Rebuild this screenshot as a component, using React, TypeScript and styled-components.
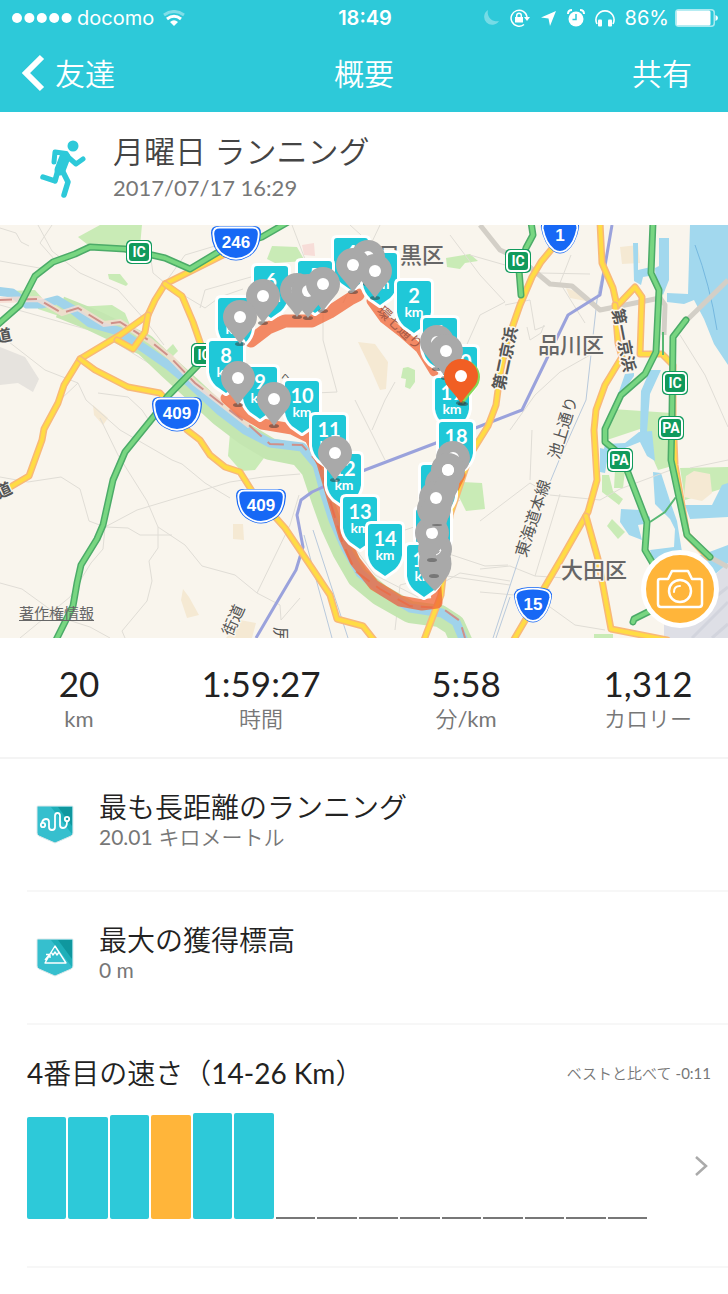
import React from "react";
import styled, { createGlobalStyle } from "styled-components";

const TEAL = "#2dc9d9";
const AMBER = "#ffb53a";

const GlobalStyle = createGlobalStyle`
  *, *::before, *::after { box-sizing: border-box; }
  body {
    margin: 0;
    background: #fff;
    color: #222;
    font-family: Lato, "Noto Sans CJK JP", sans-serif;
  }
  button { font: inherit; color: inherit; border: 0; padding: 0; background: none; cursor: pointer; }
  h1, h2, h3, p, dl, dd, dt, ul { margin: 0; padding: 0; font-weight: 400; }
  svg { display: block; }
`;

const Header = styled.header`
  background: ${TEAL};
  color: #fff;
`;

const StatusBar = styled.div`
  display: grid;
  grid-template-columns: 1fr auto 1fr;
  align-items: center;
  height: 36px;
  padding: 0 10px 0 12px;
  font: 400 20px Inter, sans-serif;
`;

const StatusGroup = styled.div<{ $end?: boolean }>`
  display: flex;
  align-items: center;
  gap: ${(p) => (p.$end ? 6 : 9)}px;
  justify-content: ${(p) => (p.$end ? "flex-end" : "flex-start")};
`;

const Carrier = styled.span`
  display: flex;
  align-items: center;
  gap: 5px;
`;

const StatusIcons = styled.span`
  display: flex;
  align-items: center;
  gap: 10px;
  margin-right: 4px;
`;

const Clock = styled.time`
  font-weight: 600;
`;

const NavBar = styled.nav`
  display: grid;
  grid-template-columns: 1fr auto 1fr;
  align-items: center;
  height: 76px;
  padding: 0 22px 2px;
`;

const NavTitle = styled.h1`
  font-size: 30px;
  line-height: 40px;
  font-weight: 350;
`;

const NavButton = styled.button<{ $end?: boolean }>`
  display: flex;
  align-items: center;
  gap: 10px;
  justify-self: ${(p) => (p.$end ? "end" : "start")};
  padding-right: ${(p) => (p.$end ? 14 : 0)}px;
  font-size: 30px;
  line-height: 40px;
  font-weight: 350;
`;

const Activity = styled.section`
  display: flex;
  align-items: center;
  gap: 26px;
  height: 113px;
  padding: 0 38px;
`;

const ActivityTitle = styled.h2`
  font-size: 31px;
  line-height: 38px;
  font-weight: 350;
  color: #444;
`;

const ActivityDate = styled.time`
  display: block;
  font-size: 22px;
  line-height: 36px;
  color: #777;
`;

const MapPanel = styled.section`
  position: relative;
  overflow: hidden;
`;

const MapDrawing = styled.svg`
  width: 100%;
  height: auto;
`;

const CameraButton = styled.button`
  position: absolute;
  right: 9px;
  bottom: 10px;
  display: grid;
  place-items: center;
  width: 78px;
  height: 78px;
  border: 5px solid #fff;
  border-radius: 50%;
  background: ${AMBER};
`;

const LegalLink = styled.a`
  position: absolute;
  left: 19px;
  bottom: 14px;
  font-size: 15px;
  line-height: 22px;
  color: #666;
`;

const Stats = styled.dl`
  display: grid;
  grid-template-columns: 158fr 206fr 204fr 160fr;
  padding: 24px 0;
  border-bottom: 2px solid #f4f4f4;
`;

const Stat = styled.div`
  display: flex;
  flex-direction: column-reverse;
  align-items: center;
`;

const StatValue = styled.dd`
  font-size: 35px;
  line-height: 43px;
`;

const StatLabel = styled.dt`
  font-size: 22px;
  line-height: 28px;
  font-weight: 350;
  color: #777;
`;

const Figure = styled.span`
  font-weight: 400;
`;

const Records = styled.ul`
  list-style: none;
  padding-left: 27px;
`;

const RecordRow = styled.li`
  display: flex;
  align-items: center;
  gap: 24px;
  height: 133px;
  padding-left: 8px;
  border-bottom: 2px solid #f7f7f7;
`;

const RecordText = styled.div`
  padding-bottom: 10px;
`;

const RecordTitle = styled.h3`
  font-size: 28px;
  line-height: 34px;
  font-weight: 350;
`;

const RecordValue = styled.p`
  font-size: 21px;
  line-height: 26px;
  font-weight: 350;
  color: #777;
`;

const Comparison = styled.section`
  margin-left: 27px;
  padding: 28px 17px 47px 0;
  border-bottom: 2px solid #f7f7f7;
`;

const ComparisonHead = styled.div`
  display: flex;
  align-items: center;
  justify-content: space-between;
  height: 40px;
`;

const ComparisonTitle = styled.h3`
  font-size: 28px;
  line-height: 40px;
  font-weight: 350;
`;

const ComparisonNote = styled.p`
  font-size: 15px;
  line-height: 24px;
  font-weight: 350;
  color: #777;
`;

const ChartRow = styled.div`
  display: flex;
  align-items: center;
  justify-content: space-between;
  gap: 44px;
  margin-top: 20px;
`;

const Bars = styled.div`
  display: flex;
  flex: 1;
  align-items: flex-end;
  gap: 2px;
  height: 106px;
`;

const Bar = styled.div<{ $size: number; $current?: boolean }>`
  flex: 1;
  height: ${(p) => p.$size}px;
  border-radius: ${(p) => (p.$size > 2 ? 2 : 0)}px;
  background: ${(p) => (p.$size <= 2 ? "#777" : p.$current ? AMBER : TEAL)};
`;

const stats: { value: string; label: React.ReactNode }[] = [
  { value: "20", label: <Figure>km</Figure> },
  { value: "1:59:27", label: "時間" },
  { value: "5:58", label: <>分<Figure>/km</Figure></> },
  { value: "1,312", label: "カロリー" },
];

const bars = [102, 102, 104, 104, 106, 106, 2, 2, 2, 2, 2, 2, 2, 2, 2];

const shields: [string, number, number][] = [
  ["4", 351, 66], ["3", 380, 81], ["5", 315, 89], ["6", 271, 94], ["2", 414, 109],
  ["7", 235, 126], ["1", 440, 146], ["8", 226, 169], ["20", 460, 175], ["9", 260, 195],
  ["19", 452, 206], ["10", 302, 209], ["11", 329, 243], ["18", 456, 250], ["12", 344, 282],
  ["17", 438, 293], ["13", 360, 325], ["16", 433, 337], ["14", 385, 352], ["15", 424, 373],
];

const pins: [number, number][] = [
  [368, 32], [353, 40], [375, 46], [297, 65], [308, 66], [323, 59], [263, 71], [240, 92],
  [437, 117], [446, 126], [238, 153], [274, 174], [335, 228], [453, 233],
  [442, 259], [448, 245], [434, 284], [436, 273], [435, 324], [432, 308],
];

function Shield({ label, x, y }: { label: string; x: number; y: number }) {
  return (
    <g transform={`translate(${x} ${y})`} fill="#fff" textAnchor="middle" fontFamily="Lato" fontWeight="700">
      <path
        d="M-14-53H14Q17-53 17-50V-22Q16-14 10-8L0-1L-10-8Q-16-14-17-22V-50Q-17-53-14-53Z"
        fill="#1fc8d8" stroke="#fff" strokeWidth="6" strokeLinejoin="round" paintOrder="stroke"
      />
      <text y="-31" fontSize="20">{label}</text>
      <text y="-17" fontSize="14">km</text>
    </g>
  );
}

function Pin({ x, y, color = "#a9a9a9", shadow = true }: { x: number; y: number; color?: string; shadow?: boolean }) {
  return (
    <g transform={`translate(${x} ${y})`}>
      {shadow && <ellipse cy="27" rx="5" ry="2" fill="#333" opacity=".5" />}
      <path d="M0 27Q-5 20-12 12A17 17 0 1 1 12 12Q5 20 0 27Z" fill={color} />
      <circle r="6" fill="#fff" />
    </g>
  );
}

function Road({ d, kind, width = 6 }: { d: string; kind: "main" | "toll"; width?: number }) {
  const [edge, fill] = kind === "main" ? ["#f8b878", "#ffdc44"] : ["#4cab68", "#78d681"];
  return (
    <g fill="none" strokeLinejoin="round" strokeLinecap="round">
      <path d={d} stroke={edge} strokeWidth={width + 1} />
      <path d={d} stroke={fill} strokeWidth={width - 2} />
    </g>
  );
}

function TollBadge({ label, x, y }: { label: string; x: number; y: number }) {
  return (
    <g transform={`translate(${x} ${y})`}>
      <rect x="-13" y="-12" width="26" height="24" rx="5" fill="#109a5c" />
      <rect x="-11" y="-10" width="22" height="20" rx="4" fill="#109a5c" stroke="#fff" strokeWidth="2" />
      <text y="5" fontSize="14" fontWeight="700" fontFamily="Roboto" fill="#fff" textAnchor="middle">{label}</text>
    </g>
  );
}

function RouteBadge({ label, x, y }: { label: string; x: number; y: number }) {
  const wide = label.length > 2;
  const outer = wide
    ? "M-18-17H18Q25-17 25-10Q24 8 12 14Q0 21-12 14Q-24 8-25-10Q-25-17-18-17Z"
    : "M-11-17Q0-19 11-17Q20-15 19-8Q16 8 7 15Q0 20-7 15Q-16 8-19-8Q-20-15-11-17Z";
  return (
    <g transform={`translate(${x} ${y})`}>
      <path d={outer} fill="#1768f5" />
      <path d={outer} fill="none" stroke="#fff" strokeWidth="2" transform="scale(.91)" />
      <text y="5" fontSize="17" fontWeight="700" fontFamily="Liberation Sans" fill="#fff" textAnchor="middle">{label}</text>
    </g>
  );
}

function MapLabel({ text, x, y, angle = 0, size = 18, color = "#555", weight = 400 }: {
  text: string; x: number; y: number; angle?: number; size?: number; color?: string; weight?: number;
}) {
  return (
    <text
      transform={`translate(${x} ${y}) rotate(${angle})`}
      fontSize={size} fontWeight={weight} fill={color}
      stroke="#faf5ed" strokeWidth="3" strokeLinejoin="round" paintOrder="stroke"
      fontFamily="Noto Sans CJK JP"
    >
      {text}
    </text>
  );
}

const river = "M-5 66L12 68L27 79L42 79L57 75L72 84L90 98L118 106L145 124L168 140L190 158L220 186L245 205L270 218L302 222L317 240L325 270L333 295L345 322L360 348L382 366L410 383L442 388L456 397L464 416";
const riverBank = "M60 82L90 94L145 120L168 142L190 162L220 190L245 209L270 224L300 230L312 244L322 274L332 302L343 326L358 352L380 370L410 387L440 391L454 400L462 418";

function RunMap() {
  return (
    <MapDrawing viewBox="0 0 728 413" role="img" aria-label="ランニングルートの地図">
      <rect width="728" height="413" fill="#f9f5ed" />

      <g fill="#c9ebb6">
        <path d="M100 0H142L140 21L92 23L78 12Z" />
        <path d="M108 49L120 49L128 59L126 61L109 54Z" />
        <path d="M75 82L112 80L125 88L130 100L112 101Z" />
        <path d="M10 66L35 65L42 73L20 76Z" />
        <path d="M38 80L62 80L110 105L118 110L80 98L38 84Z" />
        <path d="M173 119L178 126L172 132L166 126Z" />
        <path d="M272 21L297 22L305 36L275 38L267 34Z" />
        <path d="M403 143L408 142L415 145L415 157L410 164L405 162L406 154L401 153Z" />
        <path d="M446 33L470 29L478 36L465 38L460 44L447 42Z" />
        <path d="M462 257L482 258L485 284L466 286L459 272Z" />
        <path d="M230 208L242 213L263 225L264 233L255 245L241 246L228 231Z" />
        <path d="M612 184L672 188L676 240L658 245L640 204L604 216Z" />
        <path d="M602 250L609 250L613 266L623 274L619 280L602 267Z" />
        <path d="M615 245L625 246L623 263L614 263Z" />
        <path d="M612 294L625 307L618 314L607 301Z" />
        <path d="M680 243L728 242V262L685 275Z" />
        <path d="M594 409H613V413H594Z" />
        <path d="M725 35H728V52H725Z" />
      </g>
      <g fill="#f5e9d3">
        <path d="M358 117L375 119L388 137L386 164L380 165L370 142Z" />
        <path d="M686 251L694 246L710 249L712 268L702 276L684 272Z" />
        <path d="M620 22L638 20L640 38L622 39Z" />
        <path d="M183 364L189 372L199 390L187 393L181 375Z" />
        <path d="M233 299L243 299L244 315L233 314Z" />
        <path d="M93 180L108 193L103 200L94 190Z" />
        <path d="M240 395L256 398L252 413H226Z" />
        <path d="M566 63L580 68L586 76L570 73Z" />
      </g>
      <path d="M0 122L25 132L39 154L33 167L18 158L0 160Z" fill="#e6e3de" />
      <path d="M302 20L314 18L315 31L304 30Z" fill="#f7ddd8" />
      <path d="M664 399L681 391L715 350L728 338V413H664Z" fill="#dedfe6" />
      <path d="M680 400L728 362M692 413L728 377M712 413L728 399" stroke="#d2d4dd" strokeWidth="3" />

      <g fill="#a2d8ee">
        <path d="M690 0H728V140L714 119L704 94L694 75L684 79L667 77V68L688 69Z" />
        <path d="M659 13H669V55L663 70L656 61L655 43L659 41Z" />
        <path d="M633 18H638V45L651 42L655 50L643 52L641 60L634 56Z" />
        <path d="M625 149L634 148L634 151L621 170L616 184L615 178Z" />
        <path d="M650 145L661 145L650 169L647 207L640 208L641 166Z" />
        <path d="M653 247L661 248L670 276L677 296L682 327L690 335L669 350L653 335L650 325L674 322L675 304L670 294L655 279Z" />
        <path d="M639 207L652 206L655 236L647 231L640 217L620 225L603 229L605 219L625 218Z" />
        <path d="M621 284L640 285L650 292L650 298L638 300L642 315L629 310L620 297Z" />
        <path d="M685 280L712 280L722 260L728 258V292L690 294Z" />
        <path d="M600 223L609 225L605 248L600 247Z" />
        <path d="M688 335L728 320V338L712 352L700 360Z" />
      </g>
      <path d="M695 20Q710 60 717 105" fill="none" stroke="#75b8df" />

      <g fill="none" stroke="#e0ddd6" strokeWidth="1">
        <path d="M38 0L52 26L80 48L118 65L145 95L164 120M52 0L40 18L55 35M0 36L45 44M0 3L16 8L21 17L29 21M150 28L153 48L165 58L185 30L235 15M165 59L205 83L220 72L243 64" />
        <path d="M0 80L100 108L160 145L195 172M0 110L45 145L78 158M78 158L60 175M78 158L86 175L120 205" />
        <path d="M0 252L28 257L61 252L80 264L89 296L105 302L137 285L230 257L263 252L300 249M106 302L128 303L140 310L172 310M158 302L185 320L202 341L235 350L257 368L280 380M105 302L103 324L91 338L70 372L20 413M0 358L22 364L62 393L90 402L110 413" />
        <path d="M100 193L118 230L147 276L158 302V323L149 336L152 356L147 376L122 406L125 413M120 205L172 235L182 239L205 258L230 273M98 168L128 172L142 185L152 200M200 83L205 65L258 50M323 70V115L337 167L315 168M292 0L308 42" />
        <path d="M257 368L290 300L299 270M280 380L281 395L300 373" />
        <path d="M470 30L505 40L540 48L590 49M450 10L480 50L505 77L480 90L460 135M505 80L530 75L535 105L545 101M527 102L530 115L541 108L544 100M571 30L560 58L585 98M590 130L560 147L535 170L510 205M395 157L385 175L372 205M460 275L420 300L390 310M440 326L485 341L508 340M395 405L400 360L440 350L510 360M480 296L530 258L550 270L600 275L620 264L676 243M560 269L535 351M480 344L510 341L535 351L566 353M480 367L526 371L550 382L575 400L605 405M532 205L530 255M680 110L705 150L728 202M728 235L690 243" />
        <path d="M343 78L380 0M350 0L361 10M300 230L340 230M345 310L375 350L418 372L460 348L510 356M355 175L385 235" />
      </g>
      <g fill="none" stroke="#b8c9dc" strokeWidth="1">
        <path d="M304 310L332 413M313 305L348 413M612 2L597 75L586 175L560 233L521 327L493 413M510 372L496 413" />
      </g>

      <path d={riverBank} fill="none" stroke="#c4e6b1" strokeWidth="22" strokeLinejoin="round" />
      <path d={river} fill="none" stroke="#a0d3ea" strokeWidth="9" strokeLinejoin="round" />
      <path d="M-5 75L38 74L62 88L78 83L104 99L120 97L150 116L170 132L195 158L250 201" fill="none" stroke="#f6dcd2" strokeWidth="6" opacity=".8" />
      <path d="M-5 75L38 74L62 88L78 83L104 99L120 97L150 116L170 132L195 158L250 201L270 219L302 220L320 240L330 276L342 316L355 346L380 364L410 381L442 383L460 396L465 413" fill="none" stroke="#cf9089" strokeWidth="2" strokeDasharray="17 8" />

      <path d="M480 0L500 25L520 34L550 59L572 61L600 85L660 73L665 80L664 110M728 55L686 96M708 331L728 342" fill="none" stroke="#d3cfc7" strokeWidth="5" strokeLinejoin="round" />
      <path d="M612 0L600 70L568 90L522 185L478 202L365 245L323 262L312 267L301 275L297 290L303 322L296 345L280 372L256 413" fill="none" stroke="#9aa2dc" strokeWidth="3" strokeLinejoin="round" />

      <Road kind="main" d="M243 20L165 59L155 75L148 90L120 110L80 134L64 160L58 178L44 204L42 215L29 251L0 268" />
      <Road kind="main" d="M165 59L182 71L193 97L202 123" />
      <Road kind="main" d="M148 90L145 107L133 124L117 115M80 134L95 145L128 162L160 168L175 185L187 205L200 215L210 230L225 242L240 247L252 266L285 303L312 343L330 370L337 394L363 401L374 415" />
      <Road kind="main" d="M555 20L541 37L532 52L520 80L506 120L500 150L496 180L488 201L470 230L450 290L441 370L424 415" />
      <Road kind="main" d="M600 -3L602 38L613 63L617 81L635 62L642 72L640 129L662 129L673 140L673 190L675 240L687 310L708 332" />
      <Road kind="main" d="M615 80L618 118L622 132L605 160L596 185L594 205L597 255L588 287L560 336L513 416" />
      <Road kind="main" d="M586 291L598 334L611 404L667 415" />
      <Road kind="toll" d="M-4 101L20 80L35 51L53 37L75 29L90 22L125 24L165 33L190 44L220 26L262 12L288 -3" />
      <Road kind="toll" d="M200 138L167 172L155 190L125 227L113 255L103 300L97 314L81 340L77 358L73 381L56 415" />
      <Road kind="toll" d="M531 -3L533 10L526 23L519 45L521 70" />
      <Road kind="toll" d="M653 -3L651 48L659 65L656 127L645 149L621 170L605 204L605 217L615 225L627 245L647 297L645 325L655 342L665 355" />
      <Road kind="toll" d="M686 95L673 112L672 190L671 235L687 310L710 332M650 386L634 394L633 397" />
      <path d="M663 107V130M676 272L665 287L650 297" fill="none" stroke="#58b873" strokeWidth="2" />

      <MapLabel text="目黒区" x={378} y={38} size={22} color="#666" weight={500} />
      <MapLabel text="品川区" x={538} y={128} size={22} color="#666" weight={500} />
      <MapLabel text="大田区" x={561} y={353} size={22} color="#666" weight={500} />
      <MapLabel text="第二京浜" x={504} y={166} angle={-78} size={16} weight={700} />
      <MapLabel text="第一京浜" x={612} y={85} angle={79} size={16} weight={700} />
      <MapLabel text="池上通り" x={559} y={235} angle={-73} size={16} />
      <MapLabel text="東海道本線" x={526} y={333} angle={-72} size={16} />
      <MapLabel text="道" x={-3} y={118} angle={-12} size={16} weight={700} />
      <MapLabel text="道" x={-1} y={274} angle={-25} size={16} weight={700} />
      <MapLabel text="街道" x={232} y={412} angle={-66} size={16} />
      <MapLabel text="尻" x={275} y={402} angle={90} size={16} />
      <MapLabel text="ヘ" x={281} y={156} size={10} />

      <g fill="none" stroke="#f06436" strokeOpacity=".75" strokeLinejoin="round" strokeLinecap="round">
        <path d="M251 116L268 103L285 96L312 96L330 87L350 74L358 70" strokeWidth="13" />
        <path d="M371 76L384 94L402 108L420 124L434 147" strokeWidth="9" />
        <path d="M226 173L242 187L262 199L292 204L310 213L322 238L333 276L344 312L355 336L374 360L400 376L422 380L437 378L435 350L445 280L460 250" strokeWidth="11" />
      </g>
      <text transform="translate(376 87) rotate(43)" fontSize="14" fill="#a75a46" fontFamily="Noto Sans CJK JP">環七通り</text>

      <RouteBadge label="246" x={236} y={18} />
      <RouteBadge label="409" x={177} y={189} />
      <RouteBadge label="409" x={261} y={281} />
      <RouteBadge label="1" x={560} y={11} />
      <RouteBadge label="15" x={533} y={380} />
      <TollBadge label="IC" x={139} y={27} />
      <TollBadge label="IC" x={518} y={36} />
      <TollBadge label="IC" x={204} y={130} />
      <TollBadge label="IC" x={675} y={158} />
      <TollBadge label="PA" x={671} y={203} />
      <TollBadge label="PA" x={620} y={235} />

      {shields.map(([label, x, y]) => <Shield key={label} label={label} x={x} y={y} />)}
      {pins.map(([x, y]) => <Pin key={`${x}-${y}`} x={x} y={y} shadow={y < 230} />)}
      <path d="M435 366Q424 356 420 348Q417 338 421 326L449 326Q454 340 449 349Q443 359 435 366Z" fill="#a9a9a9" />
      <path d="M420 284Q418 294 426 304L446 300L452 280L462 250L440 250Z" fill="#a9a9a9" />
      <circle cx="448" cy="245" r="6" fill="#fff" />
      <circle cx="436" cy="273" r="6" fill="#fff" />
      <g fill="#777">
        <ellipse cx="437" cy="300" rx="5" ry="1" />
        <ellipse cx="432" cy="335" rx="5" ry="2" />
        <ellipse cx="434" cy="351" rx="5" ry="2" />
      </g>
      <path d="M436 330Q440 329 441 325" fill="none" stroke="#fff" strokeWidth="1" />
      <Pin x={463} y={152} color="#86d957" />
      <Pin x={461} y={151} color="#f15f24" />
    </MapDrawing>
  );
}

function StatusGlyphs() {
  return (
    <StatusIcons>
      <svg width="18" height="18" viewBox="0 0 18 18" fill="#fff" opacity=".35" aria-hidden="true">
        <path d="M6 1A8 8 0 1 0 17 12A9 9 0 0 1 6 1Z" />
      </svg>
      <svg width="20" height="18" viewBox="0 0 20 18" fill="none" stroke="#fff" strokeWidth="1.5" aria-hidden="true">
        <path d="M14 15.5A8 8 0 1 1 17 8" />
        <path d="M14 8H20L17 12Z" fill="#fff" stroke="none" />
        <rect x="5" y="8" width="8" height="5.5" fill="#fff" stroke="none" />
        <path d="M6.7 9V6.5A2.3 2.3 0 0 1 11.3 6.5V9" />
      </svg>
      <svg width="17" height="17" viewBox="0 0 17 17" fill="#fff" aria-hidden="true">
        <path d="M16 1L10 16L8.5 8.5L1 7.5Z" />
      </svg>
      <svg width="18" height="18" viewBox="0 0 18 18" aria-hidden="true">
        <circle cx="9" cy="10" r="7.5" fill="#fff" />
        <path d="M1 5Q1 1 5 1M17 5Q17 1 13 1" fill="none" stroke="#fff" strokeWidth="2" />
        <path d="M9 5V10.5H5.5" fill="none" stroke={TEAL} strokeWidth="1.5" />
      </svg>
      <svg width="20" height="18" viewBox="0 0 20 18" aria-hidden="true">
        <path d="M2 15A9 9 0 1 1 18 15" fill="none" stroke="#fff" strokeWidth="1.6" />
        <rect x="3" y="10.5" width="4" height="7" rx="1" fill="#fff" />
        <rect x="13" y="10.5" width="4" height="7" rx="1" fill="#fff" />
      </svg>
    </StatusIcons>
  );
}

function RecordBadge({ children }: { children: React.ReactNode }) {
  return (
    <svg width="40" height="42" viewBox="0 0 40 42" fill="none" aria-hidden="true">
      <path d="M3 2H37Q38 2 38 3V29Q38 31 36 32L20 39L4 32Q2 31 2 29V3Q2 2 3 2Z" fill="#36bfce" stroke="#dce8ea" strokeWidth="1" />
      <path d="M16 3H30L37 11V30Z" fill="#1eafb8" />
      <path d="M23 3H37V22Z" fill="#0f979e" />
      {children}
    </svg>
  );
}

export default function App() {
  return (
    <>
      <GlobalStyle />
      <Header>
        <StatusBar>
          <StatusGroup>
            <Carrier>
              <svg width="60" height="10" viewBox="0 0 60 10" fill="#fff" aria-hidden="true">
                {[0, 1, 2, 3, 4].map((i) => <circle key={i} cx={5 + i * 12.4} cy="5" r="5" />)}
              </svg>
              docomo
            </Carrier>
            <svg width="22" height="17" viewBox="0 0 22 17" fill="none" stroke="#fff" strokeWidth="3" aria-hidden="true">
              <path d="M1 5Q11 -2 21 5" opacity=".4" />
              <path d="M4 9Q11 3.500 18 9" />
              <path d="M7 12Q11 8.500 15 12L11 16Z" fill="#fff" stroke="none" />
            </svg>
          </StatusGroup>
          <Clock>18:49</Clock>
          <StatusGroup $end>
            <StatusGlyphs />
            86%
            <svg width="43" height="18" viewBox="0 0 43 18" aria-hidden="true">
              <rect x=".75" y=".75" width="38.500" height="16.500" rx="3" fill="none" stroke="#fff" strokeWidth="1.5" opacity=".6" />
              <rect x="1.5" y="1.5" width="34" height="15" rx="1.500" fill="#fff" />
              <path d="M40.500 6Q43 7 43 9Q43 11 40.500 12Z" fill="#fff" />
            </svg>
          </StatusGroup>
        </StatusBar>
        <NavBar>
          <NavButton>
            <svg width="23" height="38" viewBox="0 0 23 38" fill="none" stroke="#fff" strokeWidth="6" aria-hidden="true">
              <path d="M20 3L4 19L20 35" />
            </svg>
            友達
          </NavButton>
          <NavTitle>概要</NavTitle>
          <NavButton $end>共有</NavButton>
        </NavBar>
      </Header>

      <main>
        <Activity>
          <svg width="49" height="60" viewBox="0 0 49 60" fill="none" stroke={TEAL} strokeLinecap="round" strokeLinejoin="round" aria-hidden="true">
            <circle cx="35" cy="7" r="5.500" fill={TEAL} stroke="none" />
            <path d="M27 18L22 31" strokeWidth="11" />
            <path d="M28 14.500L17 13L16 23M30 18L38 25L45 20" strokeWidth="5" />
            <path d="M20 31L17 42L5 38M24 31L30 43L26 56" strokeWidth="5.500" />
          </svg>
          <div>
            <ActivityTitle>月曜日 ランニング</ActivityTitle>
            <ActivityDate dateTime="2017-07-17T16:29">2017/07/17 16:29</ActivityDate>
          </div>
        </Activity>

        <MapPanel>
          <RunMap />
          <LegalLink href="#legal">著作権情報</LegalLink>
          <CameraButton aria-label="写真を追加">
            <svg width="48" height="40" viewBox="0 0 48 40" fill="none" stroke="#fff" strokeWidth="2.500" strokeLinejoin="round" aria-hidden="true">
              <path d="M4 10H12L16 2H32L36 10H44Q46 10 46 12V35Q46 38 43 38H5Q2 38 2 35V12Q2 10 4 10Z" />
              <circle cx="24" cy="22" r="11" />
              <path d="M18 23Q18 17 24 17" strokeWidth="2" strokeLinecap="round" />
            </svg>
          </CameraButton>
        </MapPanel>

        <Stats>
          {stats.map(({ value, label }) => (
            <Stat key={value}>
              <StatLabel>{label}</StatLabel>
              <StatValue>{value}</StatValue>
            </Stat>
          ))}
        </Stats>

        <Records>
          <RecordRow>
            <RecordBadge>
              <g stroke="#fff" strokeWidth="1.800" strokeLinecap="round">
                <circle cx="8" cy="21" r="2.200" />
                <circle cx="32" cy="15" r="2.200" />
                <path d="M7 18.500Q8 15 11 15Q14 15 14 18V23Q14 26 17 26Q20 26 20 23V12Q20 9 22.500 9Q25 9 25 12V21Q25 24 28 24Q32 24 32 17.500" />
              </g>
            </RecordBadge>
            <RecordText>
              <RecordTitle>最も長距離のランニング</RecordTitle>
              <RecordValue><Figure>20.01</Figure> キロメートル</RecordValue>
            </RecordText>
          </RecordRow>
          <RecordRow>
            <RecordBadge>
              <g stroke="#fff" strokeWidth="1.400" strokeLinejoin="round">
                <path d="M15 17L20 9L31 26H10L14 19M16 15L18 18L20 15L22 18L24 15M10 23L15 17M11 17.500H15V21" />
              </g>
            </RecordBadge>
            <RecordText>
              <RecordTitle>最大の獲得標高</RecordTitle>
              <RecordValue><Figure>0 m</Figure></RecordValue>
            </RecordText>
          </RecordRow>
        </Records>

        <Comparison>
          <ComparisonHead>
            <ComparisonTitle>
              <Figure>4</Figure>番目の速さ（<Figure>14-26 Km</Figure>）
            </ComparisonTitle>
            <ComparisonNote>ベストと比べて <Figure>-0:11</Figure></ComparisonNote>
          </ComparisonHead>
          <ChartRow>
            <Bars role="img" aria-label="ランの比較">
              {bars.map((size, i) => <Bar key={i} $size={size} $current={i === 3} />)}
            </Bars>
            <button aria-label="詳細を見る">
              <svg width="20" height="24" viewBox="0 0 20 24" fill="none" stroke="#aaa" strokeWidth="2.500" aria-hidden="true">
                <path d="M5 3L15 12L5 21" />
              </svg>
            </button>
          </ChartRow>
        </Comparison>
      </main>
    </>
  );
}
